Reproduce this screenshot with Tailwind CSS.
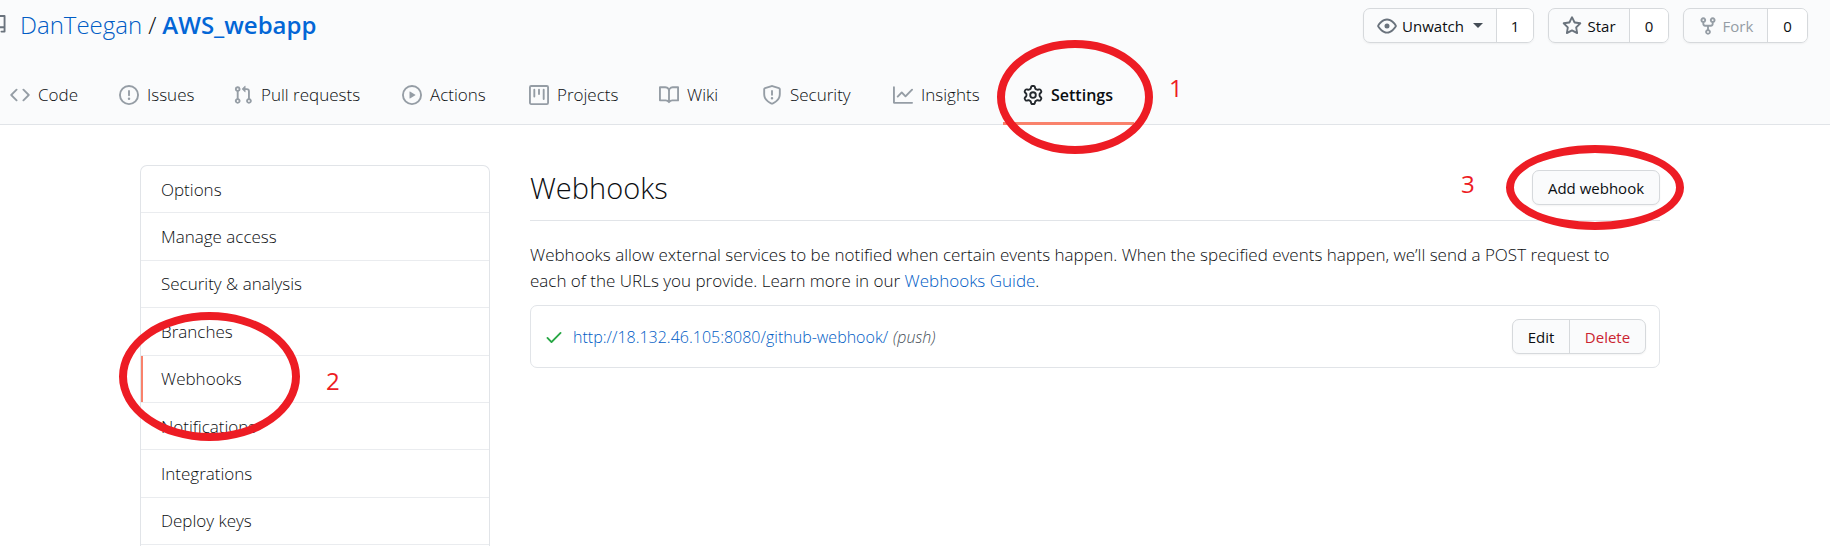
<!DOCTYPE html>
<html lang="en">
<head>
<meta charset="utf-8">
<title>Webhooks</title>
<script src="https://cdn.jsdelivr.net/npm/@tailwindcss/browser@4"></script>
</head>
<body class="relative min-h-screen overflow-x-hidden bg-white font-['Open_Sans','Noto_Sans',sans-serif] text-[17px] leading-[26px] font-light text-[#0b0e11]">
<header class="flex flex-col border-b border-[#e1e4e8] bg-[#fafbfc]">
  <div class="flex items-start justify-between pt-2 pr-[22px]">
    <div class="flex h-[33px] items-center">
      <svg class="-ml-3 mr-3 h-5 w-5 shrink-0" viewBox="0 0 16 16" fill="#6a737d"><path fill-rule="evenodd" d="M2 2.500A2.500 2.500 0 014.500 0h8.750a.75.75 0 01.75.75v12.500a.75.75 0 01-.75.75h-2.500a.75.75 0 110-1.500h1.750v-2h-8a1 1 0 00-.714 1.700.75.75 0 01-1.072 1.050A2.495 2.495 0 012 11.500v-9zm10.500-1V9h-8c-.356 0-.694.074-1 .208V2.500a1 1 0 011-1h8zM5 12.250v3.250a.25.25 0 00.4.2l1.450-1.087a.25.25 0 01.3 0L8.600 15.700a.25.25 0 00.4-.2v-3.250a.25.25 0 00-.25-.25h-3.500a.25.25 0 00-.25.25z"/></svg>
      <h1 class="flex items-center gap-[6px] text-[24px] leading-[34px]"><a href="#" class="text-[#005cc5]">DanTeegan</a><span>/</span><a href="#" class="font-semibold text-[#0366d6]">AWS_webapp</a></h1>
    </div>
    <div class="flex gap-[14px] text-[15px] font-medium">
      <div class="flex h-[35px] w-[171px] overflow-hidden rounded-[7px] border border-[#d6d9dc] shadow-xs">
        <button class="flex flex-1 items-center justify-center border-r border-[#d6d9dc]"><svg class="mr-[5px] h-5 w-5" viewBox="0 0 16 16" fill="#6a737d"><path fill-rule="evenodd" d="M1.679 7.932c.412-.621 1.242-1.750 2.366-2.717C5.175 4.242 6.527 3.500 8 3.500c1.473 0 2.824.742 3.955 1.715 1.124.967 1.954 2.096 2.366 2.717a.119.119 0 010 .136c-.412.621-1.242 1.750-2.366 2.717C10.825 11.758 9.473 12.500 8 12.500c-1.473 0-2.824-.742-3.955-1.715C2.920 9.818 2.090 8.690 1.679 8.068a.119.119 0 010-.136zM8 2c-1.981 0-3.670.992-4.933 2.078C1.797 5.169.88 6.423.43 7.100a1.619 1.619 0 000 1.798c.45.678 1.367 1.932 2.637 3.024C4.329 13.008 6.019 14 8 14c1.981 0 3.670-.992 4.933-2.078 1.270-1.091 2.187-2.345 2.637-3.023a1.619 1.619 0 000-1.798c-.45-.678-1.367-1.932-2.637-3.023C11.671 2.992 9.981 2 8 2zm0 8a2 2 0 100-4 2 2 0 000 4z"/></svg>Unwatch<span class="ml-[9px] border-x-[5px] border-t-[5px] border-x-transparent border-t-[#444d56]"></span></button>
        <a href="#" class="flex w-[36px] items-center justify-center bg-white">1</a>
      </div>
      <div class="flex h-[35px] w-[121px] overflow-hidden rounded-[7px] border border-[#d6d9dc] shadow-xs">
        <button class="flex flex-1 items-center justify-center border-r border-[#d6d9dc]"><svg class="mr-[5px] h-5 w-5" viewBox="0 0 16 16" fill="#6a737d"><path fill-rule="evenodd" d="M8 .25a.75.75 0 01.673.418l1.882 3.815 4.210.612a.75.75 0 01.416 1.279l-3.046 2.970.719 4.192a.75.75 0 01-1.088.791L8 12.347l-3.766 1.980a.75.75 0 01-1.088-.790l.72-4.194L.818 6.374a.75.75 0 01.416-1.280l4.210-.611L7.327.668A.75.75 0 018 .25zm0 2.445L6.615 5.500a.75.75 0 01-.564.410l-3.097.450 2.240 2.184a.75.75 0 01.216.664l-.528 3.084 2.769-1.456a.75.75 0 01.698 0l2.770 1.456-.530-3.084a.75.75 0 01.216-.664l2.240-2.183-3.096-.450a.75.75 0 01-.564-.410L8 2.694z"/></svg>Star</button>
        <a href="#" class="flex w-[38px] items-center justify-center bg-white">0</a>
      </div>
      <div class="flex h-[35px] w-[125px] overflow-hidden rounded-[7px] border border-[#d6d9dc] shadow-xs">
        <button class="flex flex-1 items-center justify-center border-r border-[#d6d9dc] text-[#959da5]"><svg class="mr-[5px] h-5 w-5" viewBox="0 0 16 16" fill="#959da5"><path fill-rule="evenodd" d="M5 3.250a.75.75 0 11-1.500 0 .75.75 0 011.500 0zm0 2.122a2.250 2.250 0 10-1.500 0v.878A2.250 2.250 0 005.750 8.500h1.500v2.128a2.251 2.251 0 101.500 0V8.500h1.500a2.250 2.250 0 002.250-2.250v-.878a2.250 2.250 0 10-1.500 0v.878a.75.75 0 01-.75.75h-4.500A.75.75 0 015 6.250v-.878zm3.750 7.378a.75.75 0 11-1.500 0 .75.75 0 011.500 0zm3-8.750a.75.75 0 100-1.500.75.75 0 000 1.500z"/></svg>Fork</button>
        <a href="#" class="flex w-[39px] items-center justify-center bg-white">0</a>
      </div>
    </div>
  </div>
  <nav aria-label="Repository" class="-mb-px mt-[22px] -ml-[10px] flex h-[60px] *:flex *:shrink-0 *:items-center *:gap-2 *:pl-5">
    <a href="#" class="w-[109px]"><svg class="h-5 w-5" viewBox="0 0 16 16" fill="#959da5"><path fill-rule="evenodd" d="M4.720 3.220a.75.75 0 011.060 1.060L2.060 8l3.720 3.720a.75.75 0 11-1.060 1.060L.47 8.530a.75.75 0 010-1.060l4.250-4.250zm6.560 0a.75.75 0 10-1.060 1.060L13.940 8l-3.720 3.720a.75.75 0 101.060 1.060l4.250-4.250a.75.75 0 000-1.060l-4.250-4.250z"/></svg>Code</a>
    <a href="#" class="w-[114px]"><svg class="h-5 w-5" viewBox="0 0 16 16" fill="#959da5"><path fill-rule="evenodd" d="M8 1.500a6.500 6.500 0 100 13 6.500 6.500 0 000-13zM0 8a8 8 0 1116 0A8 8 0 010 8zm9 3a1 1 0 11-2 0 1 1 0 012 0zm-.25-6.250a.75.75 0 00-1.500 0v3.500a.75.75 0 001.500 0v-3.500z"/></svg>Issues</a>
    <a href="#" class="w-[169px]"><svg class="h-5 w-5" viewBox="0 0 16 16" fill="#959da5"><path fill-rule="evenodd" d="M7.177 3.073L9.573.677A.25.25 0 0110 .854v4.792a.25.25 0 01-.427.177L7.177 3.427a.25.25 0 010-.354zM3.750 2.500a.75.75 0 100 1.500.75.75 0 000-1.500zm-2.250.75a2.250 2.250 0 113 2.122v5.256a2.251 2.251 0 11-1.500 0V5.372A2.250 2.250 0 011.500 3.250zM11 2.500h-1V4h1a1 1 0 011 1v5.628a2.251 2.251 0 101.500 0V5A2.500 2.500 0 0011 2.500zm1 10.250a.75.75 0 111.500 0 .75.75 0 01-1.500 0zM3.750 12a.75.75 0 100 1.500.75.75 0 000-1.500z"/></svg>Pull requests</a>
    <a href="#" class="w-[127px]"><svg class="h-5 w-5" viewBox="0 0 16 16" fill="#959da5"><path fill-rule="evenodd" d="M1.500 8a6.500 6.500 0 1113 0 6.500 6.500 0 01-13 0zM8 0a8 8 0 100 16A8 8 0 008 0zM6.379 5.227A.25.25 0 006 5.442v5.117a.25.25 0 00.379.214l4.264-2.559a.25.25 0 000-.428L6.379 5.227z"/></svg>Actions</a>
    <a href="#" class="w-[130px]"><svg class="h-5 w-5" viewBox="0 0 16 16" fill="#959da5"><path fill-rule="evenodd" d="M1.750 0A1.750 1.750 0 000 1.750v12.500C0 15.216.784 16 1.750 16h12.500A1.750 1.750 0 0016 14.250V1.750A1.750 1.750 0 0014.250 0H1.750zM1.500 1.750a.25.25 0 01.25-.25h12.500a.25.25 0 01.25.25v12.500a.25.25 0 01-.25.25H1.750a.25.25 0 01-.25-.25V1.750zM11.750 3a.75.75 0 00-.75.75v7.500a.75.75 0 001.500 0v-7.500a.75.75 0 00-.75-.75zm-8.250.75a.75.75 0 011.500 0v5.500a.75.75 0 01-1.500 0v-5.500zM8 3a.75.75 0 00-.75.75v3.500a.75.75 0 001.500 0v-3.500A.75.75 0 008 3z"/></svg>Projects</a>
    <a href="#" class="w-[103px]"><svg class="h-5 w-5" viewBox="0 0 16 16" fill="#959da5"><path fill-rule="evenodd" d="M0 1.750A.75.75 0 01.75 1h4.253c1.227 0 2.317.590 3 1.501A3.744 3.744 0 0111.006 1h4.245a.75.75 0 01.75.75v10.500a.75.75 0 01-.75.75h-4.507a2.250 2.250 0 00-1.591.659l-.622.621a.75.75 0 01-1.060 0l-.622-.621A2.250 2.250 0 005.258 13H.75a.75.75 0 01-.75-.75V1.750zm8.755 3a2.250 2.250 0 012.250-2.250H14.500v9h-3.757c-.710 0-1.400.201-1.992.572l.004-7.322zm-1.504 7.324l.004-5.073-.002-2.253A2.250 2.250 0 005.003 2.500H1.500v9h3.757a3.750 3.750 0 011.994.574z"/></svg>Wiki</a>
    <a href="#" class="w-[131px]"><svg class="h-5 w-5" viewBox="0 0 16 16" fill="#959da5"><path fill-rule="evenodd" d="M7.467.133a1.750 1.750 0 011.066 0l5.250 1.680A1.750 1.750 0 0115 3.480V7c0 1.566-.320 3.182-1.303 4.682-.983 1.498-2.585 2.813-5.032 3.855a1.700 1.700 0 01-1.330 0c-2.447-1.042-4.049-2.357-5.032-3.855C1.320 10.182 1 8.566 1 7V3.480a1.750 1.750 0 011.217-1.667l5.250-1.680zm.610 1.429a.25.25 0 00-.153 0l-5.250 1.680a.25.25 0 00-.174.238V7c0 1.358.275 2.666 1.057 3.860.784 1.194 2.121 2.340 4.366 3.297a.2.2 0 00.154 0c2.245-.956 3.582-2.104 4.366-3.298C13.225 9.666 13.500 8.360 13.500 7V3.480a.25.25 0 00-.174-.237l-5.250-1.680zM9 10.500a1 1 0 11-2 0 1 1 0 012 0zm-.25-5.750a.75.75 0 10-1.500 0v3a.75.75 0 001.500 0v-3z"/></svg>Security</a>
    <a href="#" class="w-[130px]"><svg class="h-5 w-5" viewBox="0 0 16 16" fill="#959da5"><path fill-rule="evenodd" d="M1.500 1.750a.75.75 0 00-1.500 0v12.500c0 .414.336.75.75.75h14.500a.75.75 0 000-1.500H1.500V1.750zm14.280 2.530a.75.75 0 00-1.060-1.060L10 7.940 7.530 5.470a.75.75 0 00-1.060 0L3.220 8.720a.75.75 0 001.060 1.060L7 7.060l2.470 2.470a.75.75 0 001.060 0l5.250-5.250z"/></svg>Insights</a>
    <a href="#" aria-current="page" class="w-[131px] border-b-3 border-[#f9826c] pt-[3px] text-[16px] font-semibold"><svg class="h-5 w-5" viewBox="0 0 16 16" fill="#24292e"><path fill-rule="evenodd" d="M7.429 1.525a6.593 6.593 0 011.142 0c.036.003.108.036.137.146l.289 1.105c.147.560.550.967.997 1.189.174.086.341.183.501.290.417.278.970.423 1.530.270l1.102-.303c.110-.030.175.016.195.046.219.310.410.641.573.989.014.031.022.110-.059.190l-.815.806c-.411.406-.562.957-.530 1.456a4.588 4.588 0 010 .582c-.032.499.119 1.050.530 1.456l.815.806c.080.080.073.159.059.190a6.494 6.494 0 01-.573.990c-.020.029-.086.074-.195.045l-1.103-.303c-.559-.153-1.112-.008-1.529.270-.160.107-.327.204-.500.290-.449.222-.851.628-.998 1.189l-.289 1.105c-.029.110-.101.143-.137.146a6.613 6.613 0 01-1.142 0c-.036-.003-.108-.037-.137-.146l-.289-1.105c-.147-.560-.550-.967-.997-1.189a4.502 4.502 0 01-.501-.290c-.417-.278-.970-.423-1.530-.270l-1.102.303c-.110.030-.175-.016-.195-.046a6.492 6.492 0 01-.573-.989c-.014-.031-.022-.110.059-.190l.815-.806c.411-.406.562-.957.530-1.456a4.587 4.587 0 010-.582c.032-.499-.119-1.050-.530-1.456l-.815-.806c-.080-.080-.073-.159-.059-.190a6.440 6.440 0 01.573-.990c.020-.029.086-.075.195-.045l1.103.303c.559.153 1.112.008 1.529-.270.160-.107.327-.204.500-.290.449-.222.851-.628.998-1.189l.289-1.105c.029-.110.101-.143.137-.146zM8 0c-.236 0-.470.010-.701.030-.743.065-1.290.615-1.458 1.261l-.290 1.106c-.017.066-.078.158-.211.224a5.994 5.994 0 00-.668.386c-.123.082-.233.090-.300.071L3.270 2.776c-.644-.177-1.392.020-1.820.630a7.977 7.977 0 00-.704 1.217c-.315.675-.111 1.422.363 1.891l.815.806c.050.048.098.147.088.294a6.084 6.084 0 000 .772c.010.147-.038.246-.088.294l-.815.806c-.474.469-.678 1.216-.363 1.891.200.428.436.835.704 1.218.428.609 1.176.806 1.820.630l1.103-.303c.066-.019.176-.011.299.071.213.143.436.272.668.386.133.066.194.158.212.224l.289 1.106c.169.646.715 1.196 1.458 1.260a8.094 8.094 0 001.402 0c.743-.064 1.290-.614 1.458-1.260l.290-1.106c.017-.066.078-.158.211-.224a5.980 5.980 0 00.668-.386c.123-.082.233-.090.300-.071l1.102.302c.644.177 1.392-.020 1.820-.630.268-.382.505-.789.704-1.217.315-.675.111-1.422-.364-1.891l-.814-.806c-.050-.048-.098-.147-.088-.294a6.100 6.100 0 000-.772c-.010-.147.039-.246.088-.294l.814-.806c.475-.469.679-1.216.364-1.891a7.992 7.992 0 00-.704-1.218c-.428-.609-1.176-.806-1.820-.630l-1.103.303c-.066.019-.176.011-.299-.071a5.991 5.991 0 00-.668-.386c-.133-.066-.194-.158-.212-.224L10.160 1.290C9.990.645 9.444.095 8.701.031A8.094 8.094 0 008 0zm1.500 8a1.500 1.500 0 11-3 0 1.500 1.500 0 013 0zM11 8a3 3 0 11-6 0 3 3 0 016 0z"/></svg>Settings</a>
  </nav>
</header>

<div class="flex items-start gap-10 pt-10 pr-[170px] pl-[140px]">
  <nav aria-label="Settings" class="w-[350px] shrink-0 rounded-t-[7px] border-x border-t border-[#e1e4e8] pb-[2px]">
    <ul class="grid h-[379px] auto-rows-fr *:border-b *:border-[#eaecef] [&_a]:flex [&_a]:h-full [&_a]:items-center [&_a]:pt-px [&_a]:pl-5">
      <li><a href="#">Options</a></li>
      <li><a href="#">Manage access</a></li>
      <li><a href="#">Security &amp; analysis</a></li>
      <li><a href="#">Branches</a></li>
      <li><a href="#" aria-current="page" class="shadow-[inset_2px_0_0_#f9826c]">Webhooks</a></li>
      <li><a href="#">Notifications</a></li>
      <li><a href="#">Integrations</a></li>
      <li><a href="#">Deploy keys</a></li>
    </ul>
  </nav>
  <main class="min-w-0 flex-1">
    <div class="flex h-[56px] items-start justify-between border-b border-[#e1e4e8]">
      <h2 class="text-[29px] leading-[46px]">Webhooks</h2>
      <button class="mt-[5px] h-[35px] w-[128px] rounded-[7px] border border-[#d6d9dc] bg-[#fafbfc] text-[15px] font-medium shadow-xs">Add webhook</button>
    </div>
    <p class="pt-[21px] pr-6">Webhooks allow external services to be notified when certain events happen. When the specified events happen, we’ll send a POST request to each of the URLs you provide. Learn more in our <a href="#" class="text-[#005cc5]">Webhooks Guide</a>.</p>
    <div class="mt-[11px] flex h-[63px] items-center rounded-[7px] border border-[#e1e4e8] px-[13px] text-[16px]">
      <svg class="mr-[9px] h-5 w-5 shrink-0" viewBox="0 0 16 16" fill="#28a745"><path fill-rule="evenodd" d="M13.780 4.220a.75.75 0 010 1.060l-7.250 7.250a.75.75 0 01-1.060 0L2.220 9.280a.75.75 0 011.060-1.060L6 10.940l6.720-6.720a.75.75 0 011.060 0z"/></svg>
      <a href="#" class="text-[#005cc5]">http://18.132.46.105:8080/github-webhook/</a><em class="ml-[5px] text-[#444d56]">(push)</em>
      <div class="ml-auto flex h-[35px] w-[134px] overflow-hidden rounded-[7px] border border-[#d6d9dc] bg-[#fafbfc] text-[15px] font-medium shadow-xs">
        <button class="w-[57px] border-r border-[#d6d9dc]">Edit</button>
        <button class="flex-1 text-[#cb2431]">Delete</button>
      </div>
    </div>
  </main>
</div>

<!-- Step markers over the page -->
<div class="pointer-events-none absolute inset-0 text-[24px] leading-[24px] font-normal text-[#ed1c24]">
  <div class="absolute top-[40px] left-[997px] h-[114px] w-[156px] rounded-[50%] border-8 border-[#ed1c24]"></div>
  <span class="absolute top-[76px] left-[1169px]">1</span>
  <div class="absolute top-[312px] left-[119px] h-[129px] w-[181px] rounded-[50%] border-8 border-[#ed1c24]"></div>
  <span class="absolute top-[369px] left-[326px]">2</span>
  <div class="absolute top-[145px] left-[1506px] h-[85px] w-[178px] rounded-[50%] border-8 border-[#ed1c24]"></div>
  <span class="absolute top-[172px] left-[1461px]">3</span>
</div>
</body>
</html>
